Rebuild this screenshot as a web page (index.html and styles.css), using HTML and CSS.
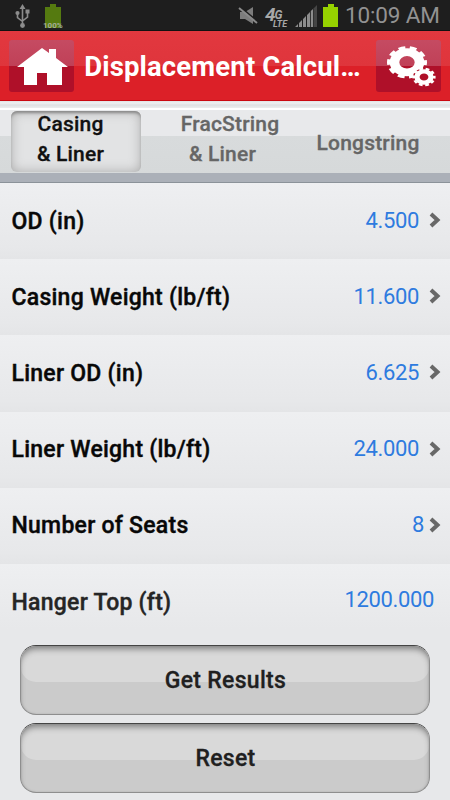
FILE: index.html
```html
<!DOCTYPE html>
<html lang="en">
<head>
    <meta charset="UTF-8">
    <meta name="viewport" content="width=device-width, initial-scale=1.0">
    <title>Displacement Calculator</title>
    <link rel="stylesheet" href="styles.css">
</head>
<body>
    <div class="status-bar">
        <svg class="usb" width="16" height="25" viewBox="0 0 16 25" fill="none" stroke="#8c8c8c" stroke-width="1.6">
            <path d="M7.500 4v18M2.500 9v4.500l5 4M12.500 8v5l-5 4"/>
            <path d="M7.500 0l3 5h-6zM10.500 5.500h4v4h-4z" fill="#8c8c8c" stroke="none"/>
            <circle cx="2.500" cy="9" r="2.100" fill="#8c8c8c" stroke="none"/>
            <circle cx="7.500" cy="21.500" r="2.400" fill="#8c8c8c" stroke="none"/>
        </svg>
        <div class="charge">
            <svg width="16" height="24" viewBox="0 0 16 24" fill="#557a10"><path d="M0 3h5V0h6v3h5v21H0z"/></svg>
            <span>100%</span>
        </div>
        <div class="status-right">
            <svg class="mute" width="20" height="20" viewBox="0 0 20 20">
                <path d="M2 6h5l8-5v17l-8-5H2z" fill="#7c7c7c"/>
                <path d="M2 1l17 14" stroke="#1e1e1e" stroke-width="2"/>
                <path d="M1 2l18 15" stroke="#8a8a8a" stroke-width="2"/>
            </svg>
            <div class="network"><b>4<small>G</small></b><i>LTE</i></div>
            <svg class="signal" width="22" height="23" viewBox="0 0 22 23">
                <path d="M0 22l3-3v3zM4 18l3-3v7H4zM8 14l3-3v11H8zM12 10l3-3v15h-3z" fill="#8c8c8c"/>
                <path d="M15.800 6L18 4v18h-2.200z" fill="#8c8c8c"/>
                <path d="M18.500 3.500L22 0v22h-3.500z" fill="#454545"/>
            </svg>
            <svg class="battery" width="15" height="23" viewBox="0 0 15 23" fill="#96d200"><path d="M0 3h5V0h6v3h4v20H0z"/></svg>
            <span class="clock">10:09 AM</span>
        </div>
    </div>

    <div class="header">
        <div class="icon-btn">
            <svg width="65" height="52" viewBox="0 0 65 52" fill="#fff"><path d="M8 27L33 8l7 5V9h7v9l12 9h-6v18H38V33H28v12H15V27z"/></svg>
        </div>
        <h1 class="title">Displacement Calcul…</h1>
        <div class="icon-btn">
            <svg width="65" height="52" viewBox="0 0 65 52">
                <g fill="none" stroke="#fff" transform="translate(31 22.300) scale(1 .81)">
                    <circle r="12.500" stroke-width="9.600"/>
                    <circle r="18" stroke-width="4" stroke-dasharray="6.800 4.510" stroke-dashoffset="3.400"/>
                </g>
                <g fill="none" stroke="#fff" transform="translate(48 37) scale(1 .8)">
                    <circle r="11" fill="#af1028" stroke="none"/>
                    <circle r="7" stroke-width="5.200"/>
                    <circle r="10.300" stroke-width="2.600" stroke-dasharray="3.800 2.671" stroke-dashoffset="1.900"/>
                </g>
            </svg>
        </div>
    </div>

    <div class="tabs">
        <div class="tab active"><span>Casing<br>&amp; Liner</span></div>
        <div class="tab frac"><span>FracString</span><span class="second">&amp; Liner</span></div>
        <div class="tab long"><span>Longstring</span></div>
    </div>

    <div class="list">
        <div class="row">
            <span class="label">OD (in)</span><span class="value">4.500</span>
            <svg class="arrow" width="12" height="16" viewBox="0 0 12 16"><path d="M2 2l6.500 6L2 14" fill="none" stroke="#686868" stroke-width="4"/></svg>
        </div>
        <div class="row">
            <span class="label">Casing Weight (lb/ft)</span><span class="value">11.600</span>
            <svg class="arrow" width="12" height="16" viewBox="0 0 12 16"><path d="M2 2l6.500 6L2 14" fill="none" stroke="#686868" stroke-width="4"/></svg>
        </div>
        <div class="row">
            <span class="label">Liner OD (in)</span><span class="value">6.625</span>
            <svg class="arrow" width="12" height="16" viewBox="0 0 12 16"><path d="M2 2l6.500 6L2 14" fill="none" stroke="#686868" stroke-width="4"/></svg>
        </div>
        <div class="row">
            <span class="label">Liner Weight (lb/ft)</span><span class="value">24.000</span>
            <svg class="arrow" width="12" height="16" viewBox="0 0 12 16"><path d="M2 2l6.500 6L2 14" fill="none" stroke="#686868" stroke-width="4"/></svg>
        </div>
        <div class="row">
            <span class="label">Number of Seats</span><span class="value seats">8</span>
            <svg class="arrow" width="12" height="16" viewBox="0 0 12 16"><path d="M2 2l6.500 6L2 14" fill="none" stroke="#686868" stroke-width="4"/></svg>
        </div>
        <div class="row hanger">
            <span class="label">Hanger Top (ft)</span><span class="value">1200.000</span>
        </div>
    </div>

    <div class="buttons">
        <button><span>Get Results</span></button>
        <button><span>Reset</span></button>
    </div>
</body>
</html>
```
FILE: styles.css
```css
* {
    margin: 0;
    padding: 0;
    box-sizing: border-box;
}

body {
    width: 450px;
    height: 800px;
    overflow: hidden;
    font-family: Roboto, sans-serif;
    background: #e7e8ea;
}

.status-bar {
    height: 31px;
    display: flex;
    align-items: flex-start;
    background: #1e1e1e;
    padding: 4px 12px 0 15px;
    border-bottom: 1px solid #111;
}

.charge {
    width: 20px;
    height: 25px;
    margin-left: 14px;
    position: relative;
}

.charge span {
    position: absolute;
    left: -2px;
    bottom: -1px;
    font-size: 8px;
    line-height: 8px;
    font-weight: 700;
    color: #a5ad98;
}

.status-right {
    display: flex;
    margin-left: auto;
}

.mute {
    margin: 2px 7px 0 0;
}

.network {
    width: 23px;
    height: 24px;
    color: #a8a8a8;
    font-style: italic;
    display: flex;
    flex-direction: column;
}

.network b {
    font-size: 19px;
    line-height: 16px;
    margin-top: 3px;
    letter-spacing: -1px;
    height: 13px;
}

.network small {
    font-size: 12px;
    position: relative;
    top: -2px;
}

.network i {
    font-size: 9px;
    line-height: 8px;
    margin-left: 8px;
    font-weight: 700;
}

.signal {
    margin: 1px 6px 0 7px;
}

.clock {
    font-size: 22.5px;
    line-height: 23px;
    color: #929292;
    margin-left: 7px;
    width: 93px;
    letter-spacing: -0.15px;
    white-space: nowrap;
}

.header {
    height: 70px;
    display: flex;
    align-items: center;
    justify-content: space-between;
    padding: 0 9px;
    background: linear-gradient(#e2383f 0, #df353c 35px, #dc2028 35px, #dc2028 69px, #cb0710 69px);
}

.icon-btn {
    width: 65px;
    height: 52px;
    border-radius: 3px;
    background: linear-gradient(#c54b62 0, #c04057 26px, #af1029 26px, #af1029);
}

.title {
    color: #fff;
    font-size: 27.5px;
    font-weight: 700;
    letter-spacing: 0.15px;
    margin-right: 5px;
    white-space: nowrap;
}

.tabs {
    height: 82px;
    display: flex;
    padding: 10px 0 0 11px;
    color: #666;
    font-size: 21px;
    line-height: 30px;
    font-weight: 500;
    letter-spacing: 0.2px;
    -webkit-text-stroke: 0.3px;
    text-align: center;
    border-bottom: 1px solid #8b9299;
    background: linear-gradient(#e1e2e4 0, #eff0f1 2px, #dfe0e2 4px, #eceded 7px, #fff 7px, #fff 9px, #e8e9eb 9px, #e8e9eb 35px, #d8dbdc 35px, #d6d9da 72px, #abb0b8 72px);
}

.tab {
    height: 61px;
}

.tab span {
    display: block;
    white-space: nowrap;
}

.active {
    width: 130px;
    padding-right: 11px;
    border-radius: 6px;
    color: #111;
    background: #e2e3e4;
    box-shadow: inset 0 3px 3px -1px #888, inset 0 0 12px #aaa;
}

.active span {
    margin-top: -2px;
}

.frac {
    width: 120px;
    margin-left: 29px;
    margin-top: -2px;
}

.frac .second {
    padding-right: 15px;
}

.long {
    width: 104px;
    margin-left: 26px;
    padding-top: 17px;
}

.row {
    height: 76.2px;
    display: flex;
    align-items: center;
    padding: 0 9px 0 11.5px;
    background: linear-gradient(#eeeff1, #e7e8ea 85%, #e4e5e7);
}

.label {
    font-size: 23px;
    font-weight: 500;
    letter-spacing: 0.25px;
    -webkit-text-stroke: 0.4px;
    color: #080808;
    white-space: nowrap;
}

.value {
    margin-left: auto;
    margin-top: -2px;
    font-size: 22px;
    letter-spacing: -0.35px;
    color: #2e7bdf;
}

.arrow {
    margin: -2px 0 0 10px;
}

.seats + .arrow {
    margin-left: 5px;
}

.hanger {
    padding-right: 16px;
    background: linear-gradient(#eeeff1, #e7e8ea 85%);
}

.hanger .label {
    color: #252525;
}

.hanger .value {
    margin-top: -6px;
}

.buttons {
    display: flex;
    flex-direction: column;
    gap: 8px;
    padding: 5px 20px 0;
}

button {
    height: 70px;
    border: 1px solid #8e8e8e;
    border-top-color: #444;
    border-radius: 16px;
    font-family: Roboto, sans-serif;
    font-size: 23px;
    font-weight: 500;
    letter-spacing: 0.3px;
    -webkit-text-stroke: 0.3px;
    color: #202020;
    position: relative;
    background: #cbcbcb;
}

/* glossy upper half */
button::before {
    content: "";
    position: absolute;
    top: 0;
    left: 0;
    right: 0;
    height: 36px;
    border-radius: 15px;
    background: #d9d9d9;
}

button::after {
    content: "";
    position: absolute;
    top: 0;
    left: 0;
    right: 0;
    bottom: 0;
    border-radius: 15px;
    box-shadow: inset 0 5px 6px -2px #808080, inset 0 0 2px #aaa;
}

button span {
    position: relative;
    left: 0.5px;
}
```
